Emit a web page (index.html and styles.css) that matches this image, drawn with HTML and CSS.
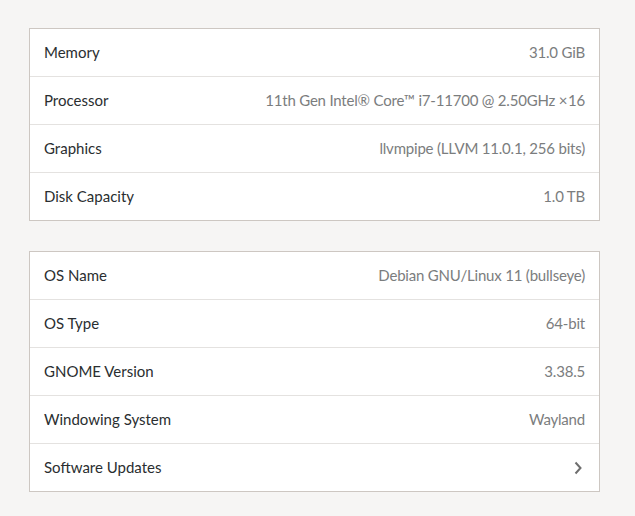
FILE: index.html
```html
<!DOCTYPE html>
<html lang="en">
<head>
    <meta charset="UTF-8">
    <meta name="viewport" content="width=device-width, initial-scale=1.0">
    <title>About</title>
    <link rel="stylesheet" href="styles.css">
</head>
<body>
    <div class="page">
        <div class="list">
            <div class="row"><span class="label">Memory</span><span class="value">31.0 GiB</span></div>
            <div class="row"><span class="label">Processor</span><span class="value">11th Gen Intel® Core™ i7-11700 @ 2.50GHz ×&#8202;16</span></div>
            <div class="row"><span class="label">Graphics</span><span class="value">llvmpipe (LLVM 11.0.1, 256 bits)</span></div>
            <div class="row"><span class="label">Disk Capacity</span><span class="value">1.0 TB</span></div>
        </div>
        <div class="list">
            <div class="row"><span class="label">OS Name</span><span class="value">Debian GNU/Linux 11 (bullseye)</span></div>
            <div class="row"><span class="label">OS Type</span><span class="value">64-bit</span></div>
            <div class="row"><span class="label">GNOME Version</span><span class="value">3.38.5</span></div>
            <div class="row"><span class="label">Windowing System</span><span class="value">Wayland</span></div>
            <div class="row"><span class="label">Software Updates</span>
                <svg class="chevron" width="16" height="16" viewBox="0 0 16 16">
                    <path d="M5.5 2.5 L10.5 8 L5.5 13.5" fill="none" stroke="#6e6e6e" stroke-width="2"/>
                </svg>
            </div>
        </div>
    </div>
</body>
</html>
```
FILE: styles.css
```css
html,
body {
    margin: 0;
    height: 100%;
    background-color: #f6f5f4;
    font-family: 'Lato', 'Noto Sans', sans-serif;
    font-size: 15px;
    overflow: hidden;
}

.page {
    display: flex;
    flex-direction: column;
    gap: 30px;
    padding: 28px 35px 0 29px;
}

.list {
    background: #ffffff;
    border: 1px solid #cdc7c2;
}

.row {
    display: flex;
    align-items: center;
    justify-content: space-between;
    height: 46px;
    padding: 0 14px 1px;
    border-top: 1px solid #e4e2e0;
}

.row:first-child {
    border-top: 0;
}

.label {
    color: #2a2e30;
}

.value {
    color: #7b7d7e;
    letter-spacing: -0.2px;
}

.chevron {
    margin-right: -1px;
    margin-top: 1px;
}
```
